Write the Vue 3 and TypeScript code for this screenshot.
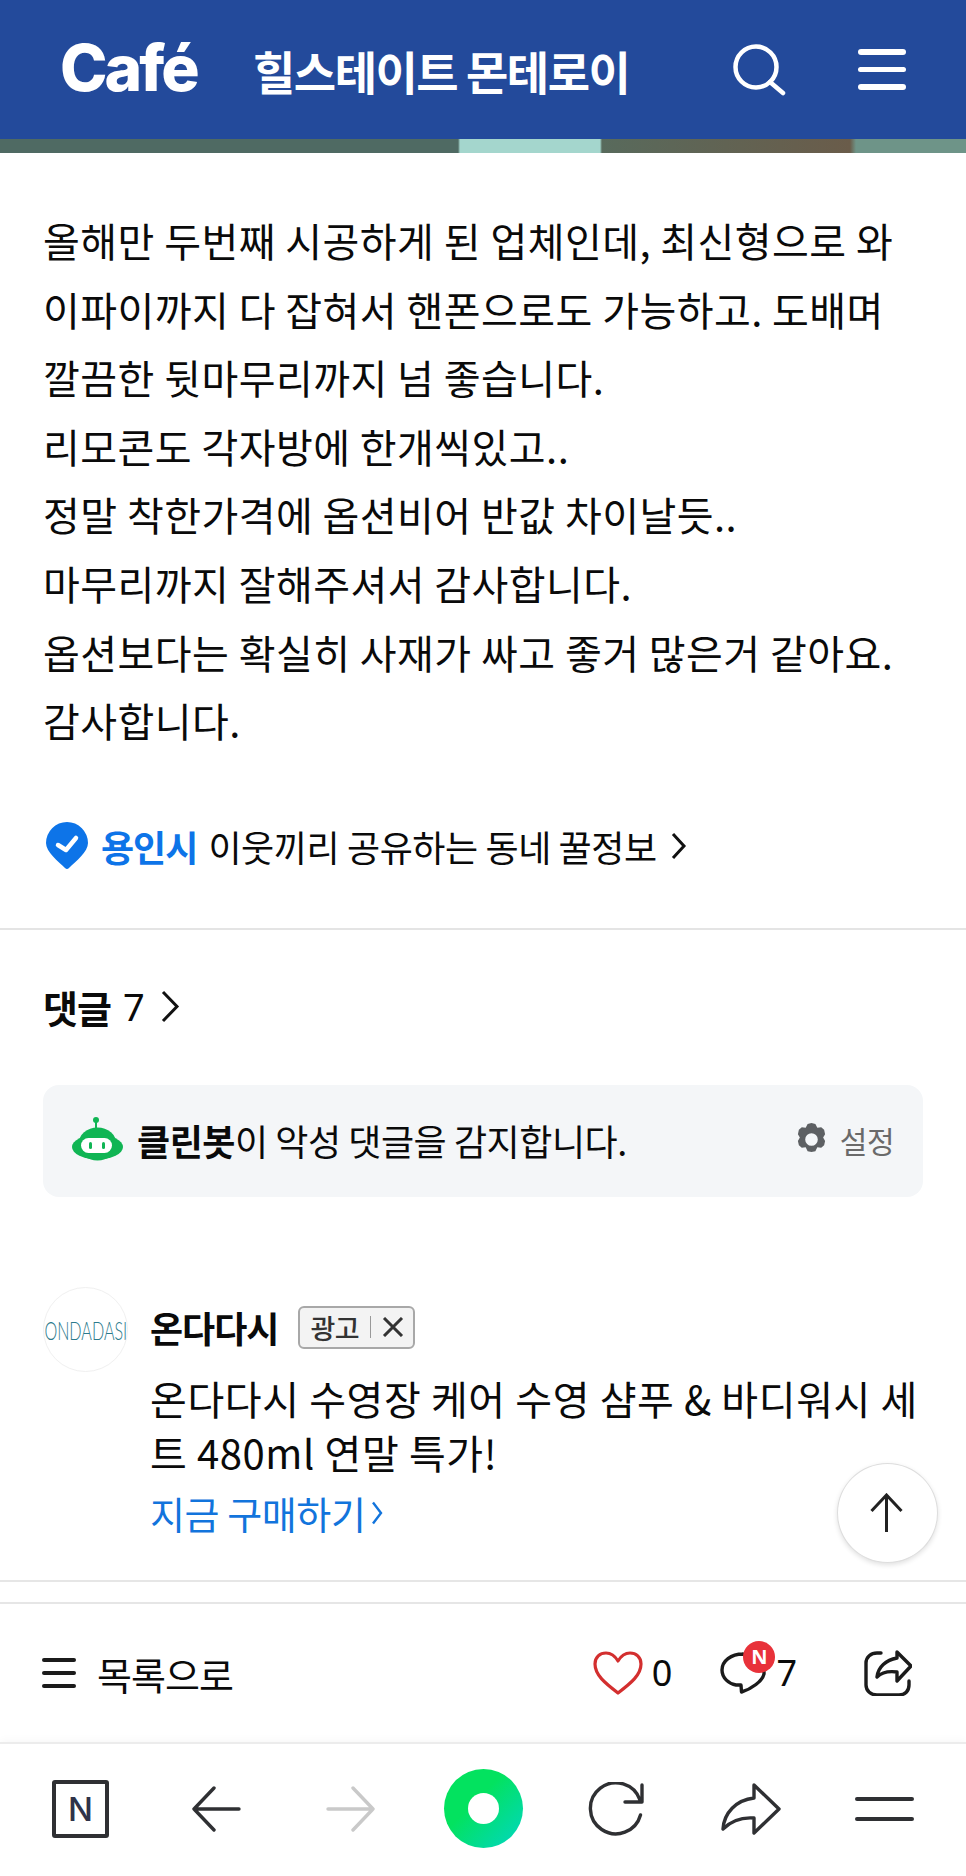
<template>
  <div class="page">
    <header class="top">
      <span class="logo">Café</span>
      <span class="club">힐스테이트 몬테로이</span>
      <svg class="search" viewBox="0 0 54 52" fill="none" stroke="#fff" stroke-width="4.500" stroke-linecap="round">
        <circle cx="23" cy="23" r="20.500" />
        <path d="M37 38l13 11" />
      </svg>
      <div class="burger"><i></i><i></i><i></i></div>
    </header>
    <div class="strip"></div>

    <article class="body">
      <p v-for="line in lines" :key="line">{{ line }}</p>
    </article>

    <div class="town">
      <svg class="pin" viewBox="0 0 42 47">
        <path d="M21 0a21 21 0 0 1 21 21c0 9-12 18-19 25a3 3 0 0 1-4 0C12 39 0 30 0 21A21 21 0 0 1 21 0z" fill="#0d74e8" />
        <path d="M12 23l8 5 10-12" fill="none" stroke="#fff" stroke-width="4.500" stroke-linecap="round" stroke-linejoin="round" />
      </svg>
      <b>용인시</b>
      <span>이웃끼리 공유하는 동네 꿀정보</span>
      <svg class="chev" viewBox="0 0 16 28" fill="none" stroke="#111" stroke-width="3"><path d="M2 2l11 12L2 26" /></svg>
    </div>

    <div class="rule"></div>

    <div class="comments">
      <b>댓글</b>
      <span>7</span>
      <svg class="chev big" viewBox="0 0 19 33" fill="none" stroke="#111" stroke-width="3"><path d="M2 2l14 14.500L2 31" /></svg>
    </div>

    <div class="bot">
      <svg class="bot-icon" viewBox="0 0 51 44">
        <circle cx="24" cy="3" r="3" fill="#10b554" />
        <rect x="23" y="3" width="2" height="10" fill="#10b554" />
        <ellipse cx="25.500" cy="27" rx="19" ry="16.500" fill="#10b554" />
        <ellipse cx="25.500" cy="30" rx="25.500" ry="12.500" fill="#10b554" />
        <rect x="9" y="21" width="31" height="15" rx="7.500" fill="#fff" />
        <rect x="17" y="25" width="3" height="7" rx="1.500" fill="#10b554" />
        <rect x="30" y="25" width="3" height="7" rx="1.500" fill="#10b554" />
      </svg>
      <p class="bot-text"><b>클린봇</b>이 악성 댓글을 감지합니다.</p>
      <svg class="gear" viewBox="0 0 34 34">
        <path fill-rule="evenodd" fill="#5d6063" d="M17 0l4 1 2 4 4-.5 3 2.500 1 4.500-2 3.500 2 3.500-1 4.500-3 2.500-4-.5-2 4-4 1-4-1-2-4-4 .5-3-2.500-1-4.500 2-3.500-2-3.500 1-4.500 3-2.500 4 .5 2-4zM17 10.500a6.500 6.500 0 100 13 6.500 6.500 0 000-13z" />
      </svg>
      <span class="setting">설정</span>
    </div>

    <section class="ad">
      <div class="avatar"><span>ONDADASI</span></div>
      <div class="ad-main">
        <div class="ad-head">
          <b>온다다시</b>
          <div class="tag">
            <span>광고</span>
            <i></i>
            <svg viewBox="0 0 22 20" fill="none" stroke="#333" stroke-width="3"><path d="M2 1l18 18M20 1L2 19" /></svg>
          </div>
        </div>
        <p class="ad-text">온다다시 수영장 케어 수영 샴푸 &amp; 바디워시 세트 480ml 연말 특가!</p>
        <div class="ad-link">지금 구매하기<svg viewBox="0 0 12 24" fill="none" stroke="#1274dc" stroke-width="2.400"><path d="M2 1.500l8 10.500-8 10.500" /></svg></div>
      </div>
      <button class="up" type="button">
        <svg viewBox="0 0 33 40" fill="none" stroke="#222" stroke-width="3"><path d="M16.500 39V3M1.500 18L16.500 2l15 16" /></svg>
      </button>
    </section>

    <div class="double"></div>

    <div class="bar">
      <div class="list-btn">
        <div class="mini"><i></i><i></i><i></i></div>
        <span>목록으로</span>
      </div>
      <div class="acts">
        <div class="act like">
          <svg viewBox="0 0 50 44" fill="none" stroke="#d32f2f" stroke-width="3.200" stroke-linejoin="round">
            <path d="M25 42C12 32 2 24 2 13 2 6 7 2 13 2c5 0 9 3 12 8 3-5 7-8 12-8 6 0 11 4 11 11 0 11-10 19-23 29z" />
          </svg>
          <span>0</span>
        </div>
        <div class="act talk">
          <svg viewBox="0 0 46 42" fill="none" stroke="#1b1b1b" stroke-width="3.400" stroke-linejoin="round">
            <path d="M23 2C11 2 2 9 2 18c0 8 7 14 14 15h5l.5 7c10-3 21-11 22.500-18 .5-12-9-20-21.500-20z" />
          </svg>
          <em>N</em>
          <span>7</span>
        </div>
        <svg class="share-box" viewBox="0 0 48 46" fill="none" stroke="#1b1b1b" stroke-width="3.400" stroke-linejoin="round" stroke-linecap="round">
          <path d="M17 3h-4C7 3 2 7 2 13v22c0 6 5 10 11 10h22c6 0 10-4 10-10v-4" />
          <path d="M33 2l14 14-14 15v-9c-8-1-15 0-20 5 1-10 9-17 20-19z" />
        </svg>
      </div>
    </div>

    <nav class="nav">
      <div class="n-box">N</div>
      <svg class="nv back" viewBox="0 0 49 46" fill="none" stroke="#2f3033" stroke-width="3.400" stroke-linecap="round" stroke-linejoin="round"><path d="M47 23H2M22 2L2 23l20 21" /></svg>
      <svg class="nv next" viewBox="0 0 49 46" fill="none" stroke="#c9c9c9" stroke-width="3.400" stroke-linecap="round" stroke-linejoin="round"><path d="M2 23h45M27 2l20 21-20 21" /></svg>
      <div class="green"><i></i></div>
      <svg class="nv reload" viewBox="0 0 56 54" fill="none" stroke="#2f3033" stroke-width="3.400" stroke-linecap="round" stroke-linejoin="round"><path d="M52.500 33A25.500 25.500 0 1 1 52 18M54 3v17H37" /></svg>
      <svg class="nv fwd" viewBox="0 0 60 52" fill="none" stroke="#2f3033" stroke-width="3.400" stroke-linejoin="round" stroke-linecap="round"><path d="M33 2l25 24-25 24V35C20 34 10 38 2 46 3 30 15 17 33 15z" /></svg>
      <div class="lines"><i></i><i></i></div>
    </nav>
  </div>
</template>

<script setup lang="ts">
const lines: string[] = [
  '올해만 두번째 시공하게 된 업체인데, 최신형으로 와',
  '이파이까지 다 잡혀서 핸폰으로도 가능하고. 도배며',
  '깔끔한 뒷마무리까지 넘 좋습니다.',
  '리모콘도 각자방에 한개씩있고..',
  '정말 착한가격에 옵션비어 반값 차이날듯..',
  '마무리까지 잘해주셔서 감사합니다.',
  '옵션보다는 확실히 사재가 싸고 좋거 많은거 같아요.',
  '감사합니다.'
]
</script>

<style>
html,
body {
  background: #fff;
}
</style>

<style scoped>
.page {
  width: 966px;
  height: 1876px;
  overflow: hidden;
  background: #fff;
  color: #0a0a0a;
  font-family: "Noto Sans CJK KR", "Noto Sans", sans-serif;
  display: flex;
  flex-direction: column;
}

p {
  margin: 0;
}

.top {
  height: 139px;
  background: #234a9b;
  display: flex;
  align-items: center;
  color: #fff;
  padding-left: 60px;
}

.logo {
  font-family: Inter, sans-serif;
  font-weight: 800;
  font-size: 64px;
  line-height: 1;
  letter-spacing: -3px;
  width: 193px;
  margin-top: -4px;
}

.club {
  font-size: 46px;
  font-weight: 700;
  letter-spacing: -1.500px;
  line-height: 1;
  width: 480px;
}

.search {
  width: 54px;
  height: 52px;
}

.burger {
  margin-left: 71px;
  width: 48px;
  display: flex;
  flex-direction: column;
  gap: 12px;
}

.burger i {
  display: block;
  height: 5.500px;
  border-radius: 3px;
  background: #fff;
}

.strip {
  height: 14px;
  background: linear-gradient(90deg, #4f6a63 0, #4f6a63 458px, #a4d6cd 460px, #a4d6cd 600px, #586a5c 602px, #6a5c4a 850px, #6e9488 856px, #6e9488 100%);
}

.body {
  padding: 53px 0 0 43px;
  height: 658px;
  box-sizing: border-box;
  font-size: 40px;
  line-height: 68.600px;
  letter-spacing: 0.450px;
}

.town {
  height: 69px;
  padding-left: 46px;
  display: flex;
  align-items: center;
  font-size: 36px;
  letter-spacing: -0.400px;
}

.pin {
  width: 42px;
  height: 47px;
  margin-right: 13px;
}

.town b {
  color: #0d74e8;
  font-weight: 700;
  letter-spacing: -1px;
  margin-right: 11px;
}

.chev {
  width: 16px;
  height: 28px;
  margin-left: 14px;
}

.rule {
  height: 2px;
  margin-top: 48px;
  background: #e4e4e4;
}

.comments {
  height: 155px;
  box-sizing: border-box;
  padding: 0 43px 3px;
  display: flex;
  align-items: center;
  font-size: 38px;
  gap: 12px;
}

.comments b {
  font-weight: 700;
  letter-spacing: -1px;
}

.comments span {
  font-family: "Noto Sans", sans-serif;
}

.chev.big {
  width: 19px;
  height: 33px;
  margin-left: 4px;
}

.bot {
  height: 112px;
  box-sizing: border-box;
  margin: 0 43px;
  background: #f4f6f8;
  border-radius: 16px;
  display: flex;
  align-items: center;
  padding: 0 29px 3px;
}

.bot-icon {
  width: 51px;
  height: 44px;
  margin-right: 14px;
  margin-top: -1px;
}

.bot-text {
  flex: 1;
  font-size: 36px;
  letter-spacing: -0.450px;
}

.bot-text b {
  font-weight: 700;
}

.gear {
  width: 33px;
  height: 33px;
  margin-right: 12px;
}

.setting {
  font-size: 30px;
  color: #6a6a6a;
  letter-spacing: -0.500px;
}

.ad {
  position: relative;
  display: flex;
  margin-top: 90px;
  padding: 0 43px;
  height: 293px;
}

.avatar {
  width: 85px;
  height: 85px;
  flex: none;
  border-radius: 50%;
  border: 1px solid #f0f0f0;
  box-sizing: border-box;
  display: flex;
  align-items: center;
  justify-content: center;
  overflow: hidden;
  margin-right: 22px;
}

.avatar span {
  font-family: Lato, sans-serif;
  font-weight: 300;
  font-size: 26px;
  color: #2b7a8c;
  transform: scaleX(0.62);
  white-space: nowrap;
}

.ad-main {
  flex: 1;
}

.ad-head {
  height: 66px;
  margin-top: 7px;
  display: flex;
  align-items: center;
}

.ad-head b {
  font-size: 36px;
  font-weight: 700;
  letter-spacing: -1px;
  margin-right: 20px;
}

.tag {
  width: 117px;
  height: 43px;
  box-sizing: border-box;
  border: 2px solid #a8a8a8;
  border-radius: 6px;
  background: #f3f3f3;
  display: flex;
  align-items: center;
  padding-left: 10px;
  font-size: 27px;
  font-weight: 500;
  letter-spacing: -0.500px;
  color: #333;
}

.tag i {
  width: 1px;
  height: 22px;
  background: #999;
  margin: 0 11px;
}

.tag svg {
  width: 22px;
  height: 20px;
}

.ad-text {
  margin-top: 11px;
  font-size: 40px;
  line-height: 54px;
  letter-spacing: 0.600px;
  width: 772px;
}

.ad-link {
  margin-top: 8px;
  font-size: 38px;
  line-height: 52px;
  color: #1274dc;
  letter-spacing: -0.400px;
  display: flex;
  align-items: center;
}

.ad-link svg {
  width: 12px;
  height: 24px;
  margin-left: 6px;
}

.up {
  position: absolute;
  left: 837px;
  top: 176px;
  width: 101px;
  height: 100px;
  border-radius: 50%;
  background: #fff;
  border: 1px solid #ddd;
  box-shadow: 0 2px 5px rgba(0, 0, 0, 0.12);
  padding: 0;
  display: flex;
  align-items: center;
  justify-content: center;
}

.up svg {
  width: 33px;
  height: 40px;
  margin-left: -2px;
}

.double {
  height: 20px;
  border-top: 2px solid #e6e6e6;
  border-bottom: 2px solid #e6e6e6;
}

.bar {
  height: 138px;
  padding: 0 54px 0 42px;
  display: flex;
  align-items: center;
  justify-content: space-between;
}

.list-btn {
  display: flex;
  align-items: center;
  font-size: 38px;
  letter-spacing: -1px;
}

.mini {
  width: 34px;
  display: flex;
  flex-direction: column;
  gap: 8.500px;
  margin-right: 21px;
}

.mini i {
  display: block;
  height: 4.500px;
  border-radius: 2px;
  background: #1b1b1b;
}

.acts {
  display: flex;
  align-items: center;
}

.act {
  position: relative;
  display: flex;
  align-items: center;
  font-family: "Noto Sans", sans-serif;
  font-size: 36px;
  line-height: 1;
}

.like svg {
  width: 50px;
  height: 44px;
  margin-right: 9px;
}

.talk {
  margin-left: 48px;
}

.talk svg {
  width: 46px;
  height: 42px;
}

.talk em {
  position: absolute;
  left: 23px;
  top: -11px;
  width: 32px;
  height: 32px;
  border-radius: 50%;
  background: #e8323a;
  color: #fff;
  font-size: 20px;
  font-style: normal;
  font-weight: 700;
  line-height: 32px;
  text-align: center;
}

.talk span {
  margin-left: 10px;
}

.share-box {
  width: 48px;
  height: 46px;
  margin-left: 67px;
}

.nav {
  flex: 1;
  border-top: 2px solid #ececec;
  box-shadow: 0 -2px 8px rgba(0, 0, 0, 0.03);
  padding: 0 0 3px 52px;
  display: flex;
  align-items: center;
}

.n-box {
  width: 57px;
  height: 58px;
  box-sizing: border-box;
  border: 4px solid #2f3033;
  border-radius: 3px;
  font-family: Inter, sans-serif;
  font-size: 33px;
  font-weight: 500;
  color: #2f3349;
  line-height: 50px;
  text-align: center;
}

.nv {
  width: 49px;
  height: 46px;
  flex: none;
}

.back {
  margin-left: 83px;
}

.next {
  margin-left: 85px;
}

.green {
  width: 79px;
  height: 79px;
  margin-left: 69px;
  border-radius: 50%;
  background: linear-gradient(135deg, #03e25f 40%, #01d6c4 100%);
  display: flex;
  align-items: center;
  justify-content: center;
}

.green i {
  width: 31px;
  height: 31px;
  border-radius: 50%;
  background: #fff;
}

.nv.reload {
  width: 56px;
  height: 54px;
  margin-left: 65px;
}

.nv.fwd {
  width: 60px;
  height: 52px;
  margin-left: 77px;
}

.lines {
  width: 59px;
  margin-left: 74px;
  display: flex;
  flex-direction: column;
  gap: 16px;
}

.lines i {
  display: block;
  height: 4px;
  border-radius: 2px;
  background: #2f3033;
}
</style>
